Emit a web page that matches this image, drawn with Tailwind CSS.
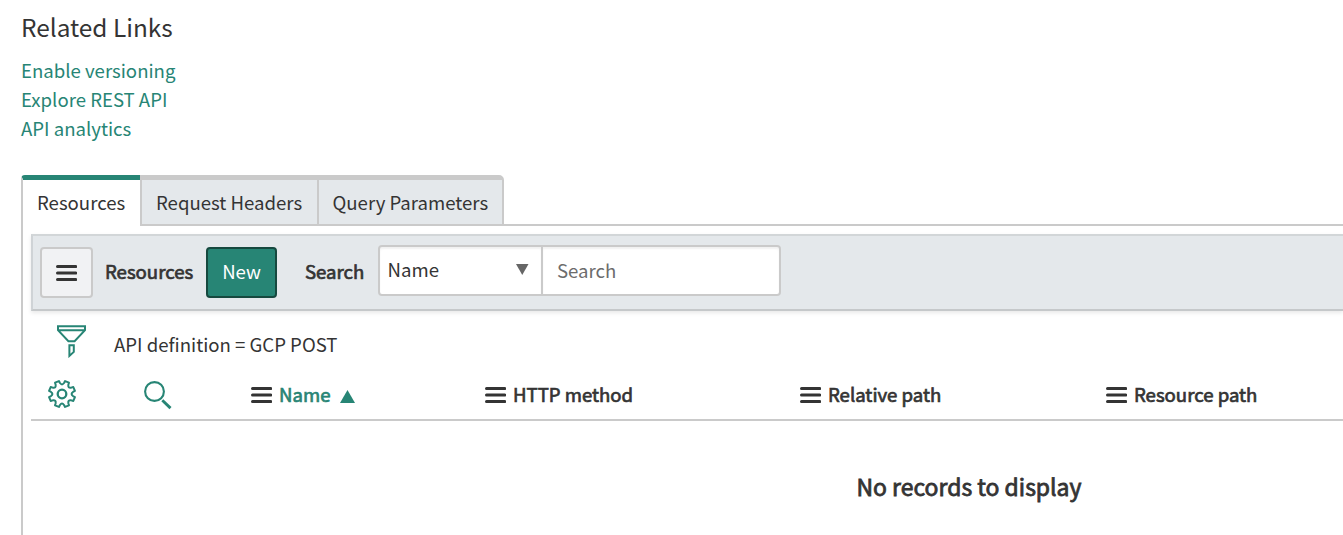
<!DOCTYPE html>
<html lang="en">
<head>
<meta charset="utf-8">
<title>Related Links</title>
<script src="https://cdn.jsdelivr.net/npm/@tailwindcss/browser@4"></script>
</head>
<body class="w-[1343px] h-[535px] overflow-hidden bg-white font-['Noto_Sans_CJK_SC',sans-serif] text-[18.6px] leading-[29px] text-[#343434] whitespace-nowrap">
<svg class="hidden">
  <symbol id="bars" viewBox="0 0 21 16"><path d="M1.5 1.5h18.2M1.5 8h18.2M1.5 14.5h18.2" stroke="#343434" stroke-width="3" stroke-linecap="round"/></symbol>
</svg>
<main class="flex h-full flex-col pl-[21px]">
  <h2 class="mt-[11px] h-[32px] text-[24.4px] leading-[32px]">Related Links</h2>
  <nav class="mt-[12px] flex h-[87px] flex-col items-start text-[#278575]">
    <a>Enable versioning</a>
    <a>Explore REST API</a>
    <a>API analytics</a>
  </nav>
  <div class="mt-[33px] flex h-[51px] shrink-0">
    <div class="h-[51px] w-[119px] rounded-tl-[4px] border-l-2 border-l-[#cacaca] border-t-5 border-t-[#278575] pl-[14px] pt-[7px]">Resources</div>
    <div class="h-[51px] w-[177px] border-b-2 border-l-2 border-t-5 border-[#cacaca] bg-[#e4e8eb] pl-[14px] pt-[7px]">Request Headers</div>
    <div class="h-[51px] w-[187px] rounded-tr-[5px] border-x-2 border-b-2 border-t-5 border-[#cacaca] bg-[#e4e8eb] pl-[13.5px] pt-[7px]">Query Parameters</div>
    <div class="h-[51px] grow border-b-2 border-[#cacaca]"></div>
  </div>
  <section class="grow border-l-2 border-[#cacaca] pl-[8px] pt-[8px]">
    <div class="flex h-[77px] border-2 border-r-0 border-b-[#c5c8ca] border-l-[#cfd3d6] border-t-[#d2d6d8] bg-[#e4e8eb] pl-[7px] shadow-[0_2px_4px_rgba(0,0,0,0.09)]">
      <button class="mt-[11px] flex h-[51px] w-[53px] items-center justify-center rounded-[4px] border-2 border-[#cacaca] bg-[#f1f2f4]"><svg class="mt-px h-[16px] w-[21px]"><use href="#bars"/></svg></button>
      <span class="ml-[12px] mt-[20px] w-[101px] [-webkit-text-stroke:0.7px_#343434]">Resources</span>
      <button class="mt-[11px] h-[51px] w-[71px] rounded-[4px] border-2 border-[#16493f] bg-[#278575] pb-[4px] text-white">New</button>
      <span class="ml-[28px] mt-[20px] w-[73px] [-webkit-text-stroke:0.7px_#343434]">Search</span>
      <div class="mt-[9px] flex h-[51px] w-[165px] rounded-l-[4px] border-2 border-[#cacaca] bg-white pl-[7.5px] pt-[7px] shadow-[inset_0_2px_2px_rgba(0,0,0,0.06)]">
        <span class="w-[128px]">Name</span>
        <svg class="mt-[10px] h-[11px] w-[13px]" viewBox="0 0 13 11"><path d="M0 0h12.5L6.25 11z" fill="#666"/></svg>
      </div>
      <div class="mt-[9px] h-[51px] w-[238px] rounded-r-[4px] border-2 border-l-0 border-[#cacaca] bg-white pl-[14px] pt-[8px] text-[#6c6c6c] shadow-[inset_0_2px_2px_rgba(0,0,0,0.06)]">Search</div>
    </div>
    <div class="flex h-[58px] pl-[26px]">
      <svg class="mt-[14px] h-[33px] w-[30px]" viewBox="0 0 30 33" fill="none" stroke="#278575" stroke-width="2"><path d="M1 1.2h27v4L17.6 16.2h-6.2L1 5.2zM1 5.2h27M12.4 20.3h4.4v6.6l-4.4 4z"/></svg>
      <span class="ml-[27px] mt-[18px]">API definition = GCP POST</span>
    </div>
    <div class="flex h-[52px] border-b-2 border-[#cacaca] pl-[16px] [-webkit-text-stroke:0.7px_#343434]">
      <svg class="mt-[10px] h-[30px] w-[30px]" viewBox="-15 -15 30 30" fill="none" stroke="#278575" stroke-width="2" stroke-linejoin="round"><circle r="4.3" stroke-width="2.3"/><path id="gear"/></svg>
      <svg class="ml-[66px] mt-[11px] h-[30px] w-[30px]" viewBox="0 0 30 30" fill="none" stroke="#278575"><circle cx="11.5" cy="11.5" r="9.4" stroke-width="2.1"/><path d="M19.3 20.3l8.2 7.8" stroke-width="2.9"/></svg>
      <div class="ml-[78px] flex w-[234px]"><svg class="mt-[18px] h-[16px] w-[21px]"><use href="#bars"/></svg><span class="ml-[7px] mt-[10px] text-[#278575] [-webkit-text-stroke:0.7px_#278575]">Name</span><svg class="ml-[10px] mt-[21px] h-[13px] w-[15px]" viewBox="0 0 15 13"><path d="M7.5 0L15 13H0z" fill="#278575" stroke="none"/></svg></div>
      <div class="flex w-[315px]"><svg class="mt-[18px] h-[16px] w-[21px]"><use href="#bars"/></svg><span class="ml-[7px] mt-[10px]">HTTP method</span></div>
      <div class="flex w-[306px]"><svg class="mt-[18px] h-[16px] w-[21px]"><use href="#bars"/></svg><span class="ml-[7px] mt-[10px]">Relative path</span></div>
      <div class="flex"><svg class="mt-[18px] h-[16px] w-[21px]"><use href="#bars"/></svg><span class="ml-[7px] mt-[10px]">Resource path</span></div>
    </div>
    <p class="ml-[825.5px] mt-[49px] text-[22.95px] leading-[32px] [-webkit-text-stroke:0.8px_#343434]">No records to display</p>
  </section>
</main>
<script>
// Eight-tooth cog outline with rounded valleys between the teeth
let d = '';
const at = (r, a) => (r * Math.cos(a)).toFixed(2) + ' ' + (r * Math.sin(a)).toFixed(2);
for (let i = 0; i < 8; i++) {
  const a = i * Math.PI / 4 + Math.PI / 8;
  d += (i ? 'L' : 'M') + at(11.2, a - 0.21) + 'L' + at(13.3, a - 0.16) + 'L' + at(13.3, a + 0.16) + 'L' + at(11.2, a + 0.21);
  d += 'Q' + at(8.2, a + Math.PI / 8) + ' ' + at(11.2, a + Math.PI / 4 - 0.21);
}
document.getElementById('gear').setAttribute('d', d + 'Z');
</script>
</body>
</html>
